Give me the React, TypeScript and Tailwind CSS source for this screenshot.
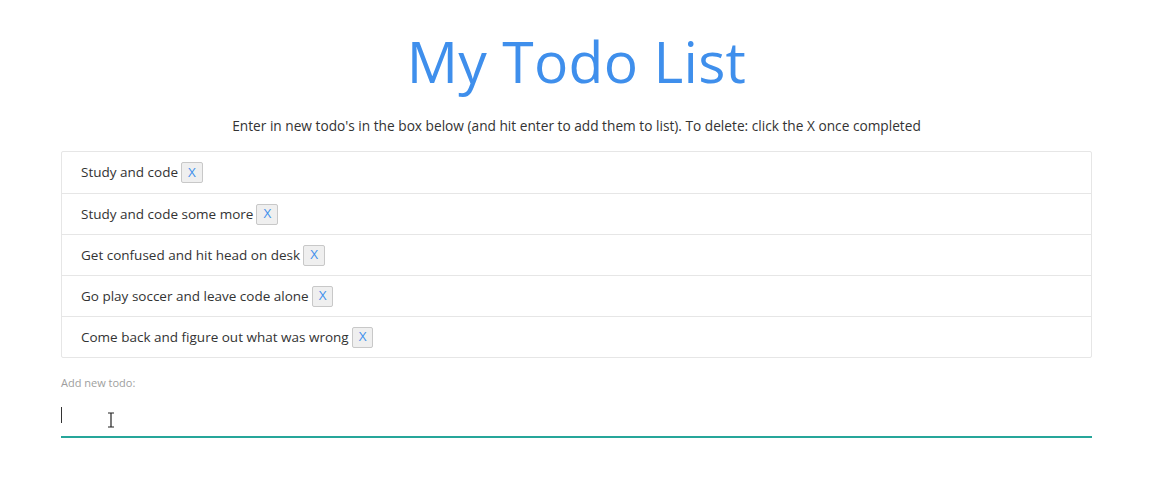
import React, { useState } from 'react';

const initialTodos = [
  'Study and code',
  'Study and code some more',
  'Get confused and hit head on desk',
  'Go play soccer and leave code alone',
  'Come back and figure out what was wrong',
];

function App() {
  const [todos, setTodos] = useState(initialTodos);
  const [text, setText] = useState('');

  return (
    <div className="min-h-screen bg-white font-['Open_Sans',sans-serif] text-[#333]">
      <div className="ml-[61px] w-[1031px] pt-[26px]">
        <h1 className="text-center text-[57px] leading-[70px] text-[#3f8fec] tracking-[0.3px]">My Todo List</h1>
        <p className="mt-[20px] text-center text-[13.7px] leading-[20px] text-[#333]">
          Enter in new todo's in the box below (and hit enter to add them to list). To delete: click the X once completed
        </p>

        <ul className="mt-[15px] border border-[#e6e6e6] rounded-[2px]">
          {todos.map((todo, i) => (
            <li
              key={i}
              className={`flex items-center h-[41px] px-[19px] text-[13.5px] ${i > 0 ? 'border-t border-[#e6e6e6]' : ''}`}
            >
              <span>{todo}</span>
              <button
                onClick={() => setTodos(todos.filter((_, j) => j !== i))}
                className="ml-[3px] h-[21px] px-[6px] bg-[#efefef] border border-[#c8c8c8] rounded-[2px] text-[13.5px] leading-none text-[#3f8fec]"
              >
                X
              </button>
            </li>
          ))}
        </ul>

        <form
          className="mt-[17px] relative"
          onSubmit={(e) => {
            e.preventDefault();
            if (text.trim()) setTodos([...todos, text]);
            setText('');
          }}
        >
          <label className="block text-[11px] leading-[16px] text-[#9e9e9e]">Add new todo:</label>
          <div className="relative mt-[15px]">
            <input
              value={text}
              onChange={(e) => setText(e.target.value)}
              className="w-full h-[32px] outline-none border-b-2 border-[#26a69a] bg-transparent text-[14px]"
            />
            <span className="absolute left-0 top-[1px] w-px h-[16px] bg-[#333]" />
            <svg className="absolute left-[46px] top-[6px]" width="8" height="16" viewBox="0 0 8 16">
              <path d="M1 1h6M4 1v14M1 15h6" stroke="#fff" strokeWidth="3" fill="none" />
              <path d="M1 1h6M4 1v14M1 15h6" stroke="#222" strokeWidth="1.2" fill="none" />
            </svg>
          </div>
        </form>
      </div>
    </div>
  );
}

export default App;
